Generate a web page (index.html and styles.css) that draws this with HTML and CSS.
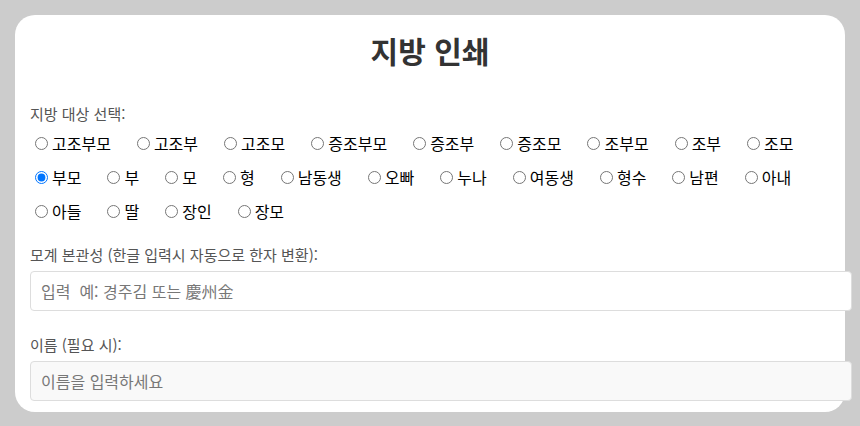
FILE: index.html
```html
<!DOCTYPE html>
<html lang="ko">
<head>
<meta charset="utf-8">
<title>지방 인쇄</title>
<link rel="stylesheet" href="styles.css">
</head>
<body>
<div class="card">
  <h1 class="title">지방 인쇄</h1>
  <div class="field">
    <div class="label">지방 대상 선택:</div>
    <div class="radios">
      <label class="opt"><input type="radio" name="t">고조부모</label>
      <label class="opt"><input type="radio" name="t">고조부</label>
      <label class="opt"><input type="radio" name="t">고조모</label>
      <label class="opt"><input type="radio" name="t">증조부모</label>
      <label class="opt"><input type="radio" name="t">증조부</label>
      <label class="opt"><input type="radio" name="t">증조모</label>
      <label class="opt"><input type="radio" name="t">조부모</label>
      <label class="opt"><input type="radio" name="t">조부</label>
      <label class="opt"><input type="radio" name="t">조모</label>
      <label class="opt"><input type="radio" name="t" checked>부모</label>
      <label class="opt"><input type="radio" name="t">부</label>
      <label class="opt"><input type="radio" name="t">모</label>
      <label class="opt"><input type="radio" name="t">형</label>
      <label class="opt"><input type="radio" name="t">남동생</label>
      <label class="opt"><input type="radio" name="t">오빠</label>
      <label class="opt"><input type="radio" name="t">누나</label>
      <label class="opt"><input type="radio" name="t">여동생</label>
      <label class="opt"><input type="radio" name="t">형수</label>
      <label class="opt"><input type="radio" name="t">남편</label>
      <label class="opt"><input type="radio" name="t">아내</label>
      <label class="opt"><input type="radio" name="t">아들</label>
      <label class="opt"><input type="radio" name="t">딸</label>
      <label class="opt"><input type="radio" name="t">장인</label>
      <label class="opt"><input type="radio" name="t">장모</label>
    </div>
  </div>
  <div class="field">
    <label class="label" for="bon">모계 본관성 (한글 입력시 자동으로 한자 변환):</label>
    <input id="bon" class="text" type="text" placeholder="입력  예: 경주김 또는 慶州金">
  </div>
  <div class="field">
    <label class="label" for="nm">이름 (필요 시):</label>
    <input id="nm" class="text text-muted" type="text" placeholder="이름을 입력하세요">
  </div>
</div>
</body>
</html>
```

FILE: styles.css
```css
html, body {
  margin: 0;
  padding: 0;
}
body {
  background: #cccccc;
  padding: 15px;
  font-family: "Noto Sans CJK KR", "Noto Sans", sans-serif;
  font-size: 15px;
}
.card {
  background: #ffffff;
  border-radius: 20px;
  padding: 15px 15px 11px;
}
.title {
  margin: 0;
  text-align: center;
  font-size: 30px;
  line-height: 40px;
  font-weight: 700;
  color: #333333;
}
.field {
  display: flex;
  flex-direction: column;
  margin-top: 24px;
}
.field:first-of-type {
  margin-top: 34px;
}
.label {
  display: block;
  color: #555555;
  font-size: 15px;
  line-height: 20px;
}
.radios {
  display: flex;
  flex-wrap: wrap;
  row-gap: 10px;
  margin-top: 7px;
  margin-bottom: -2px;
}
.opt {
  display: flex;
  align-items: center;
  line-height: 24px;
  color: #000000;
  margin-right: 21px;
  font-size: 16px;
}
.opt input {
  margin: 0 4px 0 5px;
  width: 13px;
  height: 13px;
}
.text {
  margin-top: 6px;
  width: 100%;
  padding: 9px 10px;
  border: 1px solid #dddddd;
  border-radius: 4px;
  font-family: "Noto Sans CJK KR", "Noto Sans", sans-serif;
  font-size: 16px;
  line-height: 20px;
  height: 20px;
  color: #333333;
  background: #ffffff;
  outline: none;
}
.text::placeholder {
  color: #777777;
}
.text-muted {
  background: #f9f9f9;
}
```
